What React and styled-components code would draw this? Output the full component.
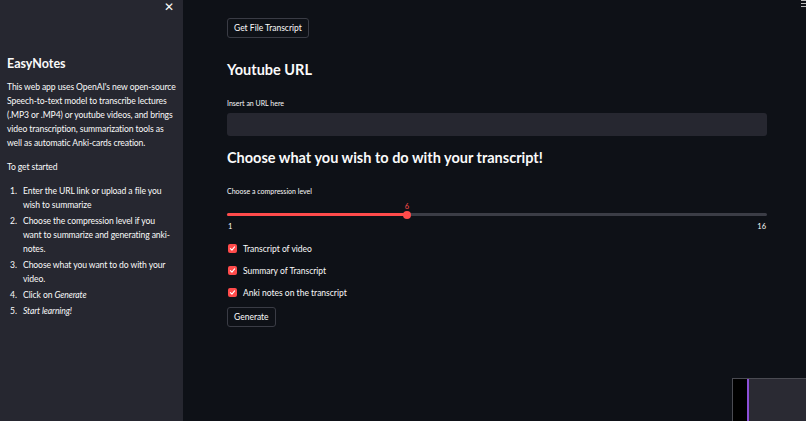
import React from 'react';
import styled, { createGlobalStyle } from 'styled-components';

const GlobalStyle = createGlobalStyle`
  html, body { margin: 0; padding: 0; background: #0e1117; }
  body { font-family: "Lato", "Liberation Sans", sans-serif; color: #fafafa; }
  * { box-sizing: border-box; }
`;

const Page = styled.div`
  display: flex;
  width: 806px;
  height: 421px;
  position: relative;
  overflow: hidden;
  background: #0e1117;
`;

const Sidebar = styled.aside`
  width: 183px;
  flex: none;
  background: #262730;
  padding: 55px 3px 0 7px;
  position: relative;
  font-size: 8.6px;
  letter-spacing: -0.1px;
  line-height: 14px;
`;

const Close = styled.div`
  position: absolute;
  top: 0;
  right: 9px;
  font-size: 12px;
  color: #fafafa;
`;

const SideTitle = styled.h2`
  margin: 0 0 7px;
  font-size: 12.5px;
  line-height: 18px;
  font-weight: 700;
  letter-spacing: 0;
`;

const Para = styled.p`
  margin: 0 0 10px;
`;

const Steps = styled.ol`
  margin: 0;
  padding: 0 6px 0 12px;
  li { margin-bottom: 2px; padding-left: 4px; }
`;

const Main = styled.main`
  flex: 1;
  padding: 18px 39px 0 44px;
  font-size: 8.5px;
`;

const Button = styled.button`
  display: block;
  font-family: inherit;
  font-size: 8.5px;
  color: #fafafa;
  background: #0e1117;
  border: 1px solid #3a3c45;
  border-radius: 3px;
  height: 20px;
  padding: 0 6px;
  margin-top: ${p => p.$mt || 0}px;
`;

const Heading = styled.h1`
  margin: ${p => p.$mt}px 0 0;
  font-size: 14.5px;
  line-height: 20px;
  font-weight: 700;
`;

const Label = styled.div`
  font-size: 7px;
  line-height: 10px;
  margin-top: ${p => p.$mt}px;
`;

const Input = styled.div`
  margin-top: 5px;
  height: 23px;
  background: #262730;
  border-radius: 3px;
`;

const Slider = styled.div`
  position: relative;
  margin-top: 7px;
  height: 28px;
`;

const Track = styled.div`
  position: absolute;
  left: 0;
  right: 0;
  top: 10px;
  height: 3px;
  border-radius: 2px;
  background: #3b3d46;
`;

const Fill = styled.div`
  height: 100%;
  background: #ff4b4b;
  border-radius: 2px;
`;

const Thumb = styled.div`
  position: absolute;
  top: 7.5px;
  width: 8px;
  height: 8px;
  margin-left: -4px;
  border-radius: 50%;
  background: #ff4b4b;
`;

const Value = styled.div`
  position: absolute;
  top: -1px;
  transform: translateX(-50%);
  font-size: 7.5px;
  color: #ff4b4b;
`;

const Tick = styled.div`
  position: absolute;
  top: 19px;
  font-size: 7.5px;
  ${p => (p.$right ? 'right: 1px;' : 'left: 1px;')}
`;

const Checks = styled.div`
  margin-top: 11px;
  display: flex;
  flex-direction: column;
  gap: 9px;
`;

const CheckRow = styled.label`
  display: flex;
  align-items: center;
  gap: 6px;
  height: 13px;
  font-size: 8.5px;
`;

const Box = styled.span`
  width: 9px;
  height: 9px;
  border-radius: 2px;
  background: #ff4b4b;
  display: flex;
  align-items: center;
  justify-content: center;
  margin-left: 1px;
`;

const MiniPlayer = styled.div`
  position: absolute;
  left: 732px;
  top: 378px;
  width: 80px;
  height: 50px;
  background: #000;
  border: 1px solid #4a4b52;
  display: flex;
`;

const PurpleLine = styled.div`
  width: 2px;
  margin-left: 14px;
  background: #8b4fd6;
`;

const PlayerBody = styled.div`
  flex: 1;
  background: #2a2a33;
`;

const Menu = styled.div`
  position: absolute;
  right: 0;
  top: 0;
  width: 5px;
  display: flex;
  flex-direction: column;
  gap: 2px;
  span { height: 1px; background: #bbb; }
`;

const Check = () => (
  <svg width="7" height="7" viewBox="0 0 10 10">
    <path d="M2 5.2 L4.2 7.3 L8 2.8" fill="none" stroke="#fff" strokeWidth="1.6" strokeLinecap="round" strokeLinejoin="round" />
  </svg>
);

export default function App() {
  const value = 6, min = 1, max = 16;
  const pct = ((value - min) / (max - min)) * 100;
  return (
    <Page>
      <GlobalStyle />
      <Sidebar>
        <Close>✕</Close>
        <SideTitle>EasyNotes</SideTitle>
        <Para>
          This web app uses OpenAI's new open-source Speech-to-text model to transcribe lectures
          (.MP3 or .MP4) or youtube videos, and brings video transcription, summarization tools as
          well as automatic Anki-cards creation.
        </Para>
        <Para>To get started</Para>
        <Steps>
          <li>Enter the URL link or upload a file you wish to summarize</li>
          <li>Choose the compression level if you want to summarize and generating anki-notes.</li>
          <li>Choose what you want to do with your video.</li>
          <li>Click on <em>Generate</em></li>
          <li><em>Start learning!</em></li>
        </Steps>
      </Sidebar>
      <Main>
        <Button>Get File Transcript</Button>
        <Heading $mt={22}>Youtube URL</Heading>
        <Label $mt={18}>Insert an URL here</Label>
        <Input />
        <Heading $mt={12}>Choose what you wish to do with your transcript!</Heading>
        <Label $mt={18}>Choose a compression level</Label>
        <Slider>
          <Track>
            <Fill style={{ width: `${pct}%` }} />
          </Track>
          <Thumb style={{ left: `${pct}%` }} />
          <Value style={{ left: `${pct}%` }}>{value}</Value>
          <Tick>{min}</Tick>
          <Tick $right>{max}</Tick>
        </Slider>
        <Checks>
          <CheckRow><Box><Check /></Box>Transcript of video</CheckRow>
          <CheckRow><Box><Check /></Box>Summary of Transcript</CheckRow>
          <CheckRow><Box><Check /></Box>Anki notes on the transcript</CheckRow>
        </Checks>
        <Button $mt={8}>Generate</Button>
      </Main>
      <MiniPlayer>
        <PurpleLine />
        <PlayerBody />
      </MiniPlayer>
      <Menu><span /><span /><span /></Menu>
    </Page>
  );
}
